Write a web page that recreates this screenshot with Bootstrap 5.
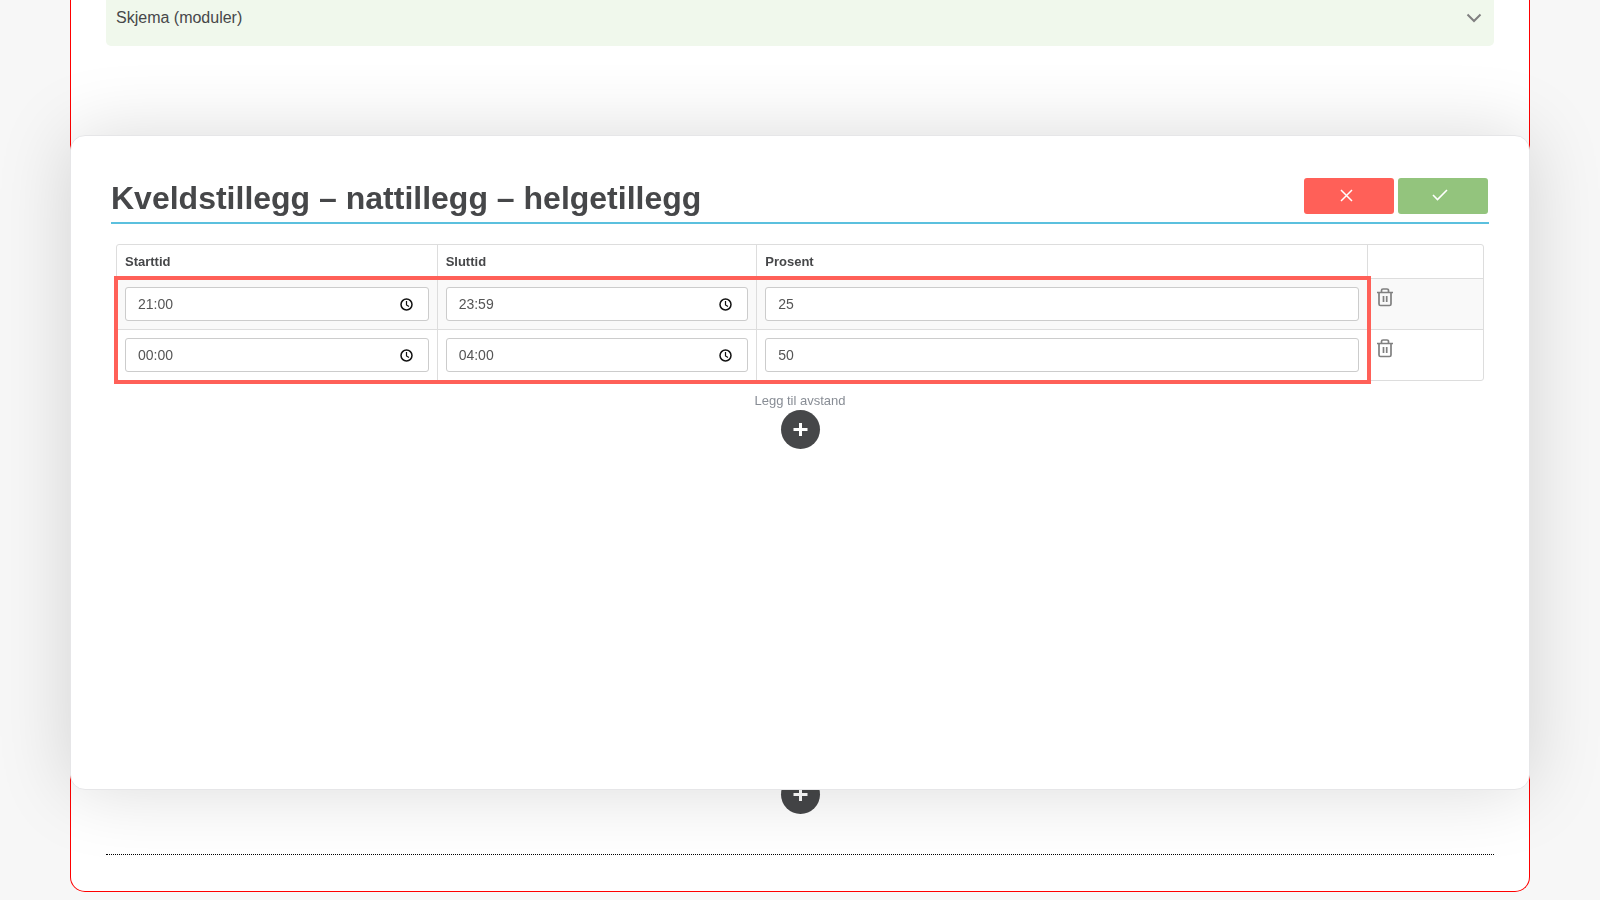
<!DOCTYPE html>
<html lang="nb">
<head>
<meta charset="utf-8">
<meta name="viewport" content="width=device-width, initial-scale=1">
<title>Kveldstillegg – nattillegg – helgetillegg</title>
<link href="https://cdn.jsdelivr.net/npm/bootstrap@5.3.0/dist/css/bootstrap.min.css" rel="stylesheet">
<style>
  body { background: #f7f7f7; color: #464749; font-family: "Liberation Sans", Arial, sans-serif; }
  .panel { margin: 0 70px 8px; padding: 0 35px 36px; border: 1px solid #f00; border-top: 0; border-radius: 0 0 15px 15px; background: #fff; }
  .module { height: 46px; padding: 0 12px 10px 10px; border-radius: 0 0 5px 5px; background: #f0f8ec; color: #464749; font-size: 16px; }
  .module-list { min-height: 775px; }
  .divider { margin-top: 40px; border-top: 1px dotted #000; }
  .add-btn { width: 39px; height: 39px; background: #464749; }
  .add-btn svg, .icon-btn svg { display: block; }
  .dialog-box { position: fixed; top: 15vh; bottom: 110px; left: 70px; right: 70px; padding: 42px 40px; border: 1px solid #e6e6e8; border-radius: 15px; background: #fff; box-shadow: 0 0 75px rgba(0, 0, 0, .15); }
  .dialog-head { padding-bottom: 4px; border-bottom: 2px solid #5bc0de; }
  .dialog-head h1 { font-size: 32px; line-height: 40px; }
  .dialog-actions { padding-right: 1px; }
  .action { width: 90px; height: 36px; padding: 0 6px 2px 0; border: 0; border-radius: 3px; color: #fff; }
  .action-cancel { background: #ff6058; }
  .action-save { background: #93c47d; }
  .rates { margin: 20px 5px 11px; }
  .rates table { width: 100%; table-layout: fixed; border: 1px solid #ddd; border-radius: 3px; border-collapse: separate; border-spacing: 0; }
  .rates th { height: 33px; padding: 0 8px; font-size: 13px; line-height: 18px; }
  .rates td { padding: 8px; border-top: 1px solid #ddd; vertical-align: top; }
  .rates th + th, .rates td + td { border-left: 1px solid #ddd; }
  .rates tbody tr:first-child { background: #f9f9f9; }
  .rates .form-control { height: 34px; padding: 0 12px; border-color: #ccc; border-radius: 3px; color: #555; font-size: 14px; }
  .icon-btn { padding: 0; border: 0; background: none; color: #808080; }
  .icon-btn.clock { right: 16px; color: #111; }
  .frame { top: 32px; bottom: -3px; left: -2px; width: 91.9%; border: 4px solid #ff6058; pointer-events: none; }
  .hint { color: #888d95; font-size: 13px; line-height: 18px; }
  .c-time { width: 23.4%; }
  .c-percent { width: 44.7%; }
</style>
</head>
<body>
<main class="panel">
  <div class="module-list">
    <button class="module btn border-0 w-100 d-flex align-items-center justify-content-between" type="button">
      <span>Skjema (moduler)</span>
      <svg width="16" height="10" viewBox="0 0 16 10" fill="none" stroke="#808080" stroke-width="2" aria-hidden="true"><path d="M1.5 1.5 8 8l6.500-6.500"/></svg>
    </button>
  </div>
  <div class="text-center">
    <button class="add-btn btn border-0 rounded-circle p-0 d-inline-flex align-items-center justify-content-center align-top" type="button" aria-label="Legg til">
      <svg width="15" height="15" viewBox="0 0 15 15" stroke="#fff" stroke-width="3" aria-hidden="true"><path d="M7.500 1v13M.5 7.500h14"/></svg>
    </button>
  </div>
  <div class="divider"></div>
</main>

<section class="dialog-box" role="dialog" aria-labelledby="dialog-title">
  <header class="dialog-head d-flex justify-content-between">
    <h1 class="fw-bold mb-0" id="dialog-title">Kveldstillegg – nattillegg – helgetillegg</h1>
    <div class="dialog-actions d-flex gap-1">
      <button class="action action-cancel d-flex align-items-center justify-content-center" type="button" aria-label="Avbryt">
        <svg width="13" height="13" viewBox="0 0 13 13" fill="none" stroke="currentColor" stroke-width="1.500"><path d="m1 1 11 11M12 1 1 12"/></svg>
      </button>
      <button class="action action-save d-flex align-items-center justify-content-center" type="button" aria-label="Lagre">
        <svg width="16" height="12" viewBox="0 0 16 12" fill="none" stroke="currentColor" stroke-width="1.600"><path d="m1 6 4.500 4.500L15 1"/></svg>
      </button>
    </div>
  </header>

  <div class="rates position-relative">
    <table>
      <colgroup><col class="c-time"><col class="c-time"><col class="c-percent"><col></colgroup>
      <thead>
        <tr><th scope="col">Starttid</th><th scope="col">Sluttid</th><th scope="col">Prosent</th><th></th></tr>
      </thead>
      <tbody>
        <tr>
          <td><div class="position-relative d-flex align-items-center"><input class="form-control" value="21:00" aria-label="Starttid 1"><button class="clock icon-btn position-absolute" type="button" aria-label="Velg starttid 1"><svg width="13" height="13" viewBox="0 0 13 13" fill="none" stroke="currentColor" stroke-width="1.500"><circle cx="6.500" cy="6.500" r="5.500"/><path d="M6.500 3v4L9 8.500" stroke-width="1.200"/></svg></button></div></td>
          <td><div class="position-relative d-flex align-items-center"><input class="form-control" value="23:59" aria-label="Sluttid 1"><button class="clock icon-btn position-absolute" type="button" aria-label="Velg sluttid 1"><svg width="13" height="13" viewBox="0 0 13 13" fill="none" stroke="currentColor" stroke-width="1.500"><circle cx="6.500" cy="6.500" r="5.500"/><path d="M6.500 3v4L9 8.500" stroke-width="1.200"/></svg></button></div></td>
          <td><input class="form-control" value="25" aria-label="Prosent 1"></td>
          <td><button class="icon-btn" type="button" aria-label="Slett rad 1"><svg width="18" height="20" viewBox="0 0 18 20" fill="none" stroke="currentColor" stroke-width="1.700"><path d="M1 5.500h16M5.500 5V3.500a1.500 1.500 0 0 1 1.500-1.500h4a1.500 1.500 0 0 1 1.500 1.500V5M3 5.500V17a1.500 1.500 0 0 0 1.500 1.500h9A1.500 1.500 0 0 0 15 17V5.500M7.500 9v6M10.700 9v6"/></svg></button></td>
        </tr>
        <tr>
          <td><div class="position-relative d-flex align-items-center"><input class="form-control" value="00:00" aria-label="Starttid 2"><button class="clock icon-btn position-absolute" type="button" aria-label="Velg starttid 2"><svg width="13" height="13" viewBox="0 0 13 13" fill="none" stroke="currentColor" stroke-width="1.500"><circle cx="6.500" cy="6.500" r="5.500"/><path d="M6.500 3v4L9 8.500" stroke-width="1.200"/></svg></button></div></td>
          <td><div class="position-relative d-flex align-items-center"><input class="form-control" value="04:00" aria-label="Sluttid 2"><button class="clock icon-btn position-absolute" type="button" aria-label="Velg sluttid 2"><svg width="13" height="13" viewBox="0 0 13 13" fill="none" stroke="currentColor" stroke-width="1.500"><circle cx="6.500" cy="6.500" r="5.500"/><path d="M6.500 3v4L9 8.500" stroke-width="1.200"/></svg></button></div></td>
          <td><input class="form-control" value="50" aria-label="Prosent 2"></td>
          <td><button class="icon-btn" type="button" aria-label="Slett rad 2"><svg width="18" height="20" viewBox="0 0 18 20" fill="none" stroke="currentColor" stroke-width="1.700"><path d="M1 5.500h16M5.500 5V3.500a1.500 1.500 0 0 1 1.500-1.500h4a1.500 1.500 0 0 1 1.500 1.500V5M3 5.500V17a1.500 1.500 0 0 0 1.500 1.500h9A1.500 1.500 0 0 0 15 17V5.500M7.500 9v6M10.700 9v6"/></svg></button></td>
        </tr>
      </tbody>
    </table>
    <div class="frame position-absolute"></div>
  </div>

  <div class="text-center">
    <div class="hint">Legg til avstand</div>
    <button class="add-btn btn border-0 rounded-circle p-0 d-inline-flex align-items-center justify-content-center align-top" type="button" aria-label="Legg til avstand">
      <svg width="15" height="15" viewBox="0 0 15 15" stroke="#fff" stroke-width="3" aria-hidden="true"><path d="M7.500 1v13M.5 7.500h14"/></svg>
    </button>
  </div>
</section>
<script src="https://cdn.jsdelivr.net/npm/bootstrap@5.3.0/dist/js/bootstrap.bundle.min.js"></script>
</body>
</html>
